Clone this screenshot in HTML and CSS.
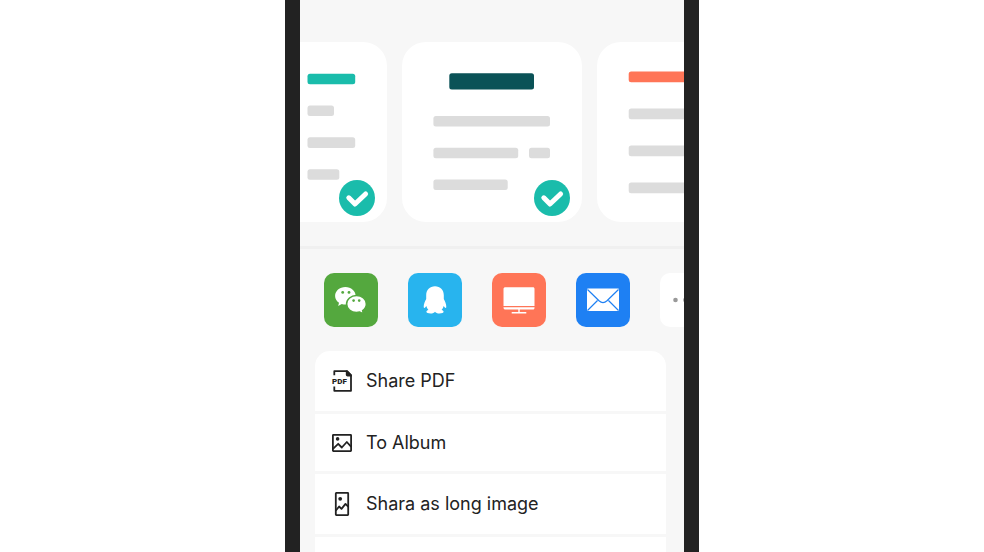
FILE: index.html
```html
<!DOCTYPE html>
<html lang="en">
<head>
<meta charset="utf-8">
<meta name="viewport" content="width=device-width, initial-scale=1">
<title>Share</title>
<link rel="stylesheet" href="styles.css">
</head>
<body>
<main class="phone">
  <section class="pages">
    <label class="page">
      <svg class="art" viewBox="0 0 180 180" aria-hidden="true">
        <g fill="#dcdcdc">
          <rect x="100.500" y="31.700" width="47.700" height="10.600" rx="2.500" fill="#1abcab"/>
          <rect x="100.500" y="63.500" width="26.500" height="10.600" rx="2.500"/>
          <rect x="100.500" y="95.300" width="47.700" height="10.600" rx="2.500"/>
          <rect x="100.500" y="127.200" width="31.800" height="10.600" rx="2.500"/>
        </g>
      </svg>
      <input class="check" type="checkbox" checked aria-label="Page 1">
      <svg class="tick" viewBox="0 0 36 36" aria-hidden="true"><path d="M9.800 17.800l6.200 6.200L26.600 14" /></svg>
    </label>
    <label class="page">
      <svg class="art" viewBox="0 0 180 180" aria-hidden="true">
        <g fill="#dcdcdc">
          <rect x="47.300" y="31.300" width="84.700" height="16.200" rx="2.500" fill="#0a5257"/>
          <rect x="31.400" y="74" width="116.600" height="10.600" rx="2.500"/>
          <rect x="31.400" y="105.700" width="84.800" height="10.600" rx="2.500"/>
          <rect x="127" y="105.700" width="21" height="10.600" rx="2.500"/>
          <rect x="31.400" y="137.500" width="74.300" height="10.600" rx="2.500"/>
        </g>
      </svg>
      <input class="check" type="checkbox" checked aria-label="Page 2">
      <svg class="tick" viewBox="0 0 36 36" aria-hidden="true"><path d="M9.800 17.800l6.200 6.200L26.600 14" /></svg>
    </label>
    <div class="page">
      <svg class="art" viewBox="0 0 180 180" aria-hidden="true">
        <g fill="#dcdcdc">
          <rect x="31.700" y="29.600" width="117" height="10.600" rx="2.500" fill="#ff7557"/>
          <rect x="31.700" y="66.600" width="117" height="10.600" rx="2.500"/>
          <rect x="31.700" y="103.600" width="117" height="10.600" rx="2.500"/>
          <rect x="31.700" y="140.600" width="117" height="10.600" rx="2.500"/>
        </g>
      </svg>
    </div>
  </section>

  <nav class="apps" aria-label="Share to">
    <button class="app wechat" aria-label="WeChat">
      <svg viewBox="0 0 54 54">
        <path fill="#fff" d="M21.400 14c-5.800 0-10.300 3.900-10.300 8.900 0 2.800 1.500 5.200 3.900 6.800l-.8 3.200 3.600-1.900c1.100.4 2.300.6 3.600.6 5.700 0 10.300-3.900 10.300-8.700s-4.600-8.900-10.300-8.900z"/>
        <path fill="#fff" stroke="#54a83e" stroke-width="1.600" d="M32.500 22.500c-5.500 0-9.900 3.800-9.900 8.500s4.400 8.500 9.900 8.500c1.100 0 2.200-.2 3.200-.5l3.800 2-.8-3.400c2.300-1.500 3.700-3.900 3.700-6.600 0-4.700-4.400-8.500-9.900-8.500z"/>
        <g fill="#54a83e"><circle cx="18.700" cy="19.400" r="1.400"/><circle cx="25" cy="19.400" r="1.400"/><circle cx="29.600" cy="27.600" r="1.300"/><circle cx="35.200" cy="27.600" r="1.300"/></g>
      </svg>
    </button>
    <button class="app qq" aria-label="QQ">
      <svg viewBox="0 0 54 54"><path fill="#fff" d="M27 13.200c-5.200 0-8.800 3.700-8.800 9v3.900c-.8 1.800-2.700 5-2.500 7.800.1 1.300.9 1.200 1.500.5l1.100-1.500c.3 1.500 1 2.800 2.100 4-1.300.4-2 1-2 1.900 0 1.200 1.800 1.700 4.200 1.700 2 0 3.600-.7 4.400-1.800.8 1.100 2.400 1.800 4.400 1.800 2.400 0 4.200-.5 4.200-1.700 0-.9-.7-1.500-2-1.900 1.100-1.200 1.800-2.500 2.100-4l1.100 1.500c.6.700 1.400.8 1.500-.5.200-2.800-1.700-6-2.500-7.800v-3.900c0-5.300-3.600-9-8.800-9z"/></svg>
    </button>
    <button class="app desktop" aria-label="Computer">
      <svg viewBox="0 0 54 54" fill="#fff">
        <path d="M13.500 14.200h27.500c.9 0 1.500.6 1.500 1.500v17.300h-31v-17.300c0-.9.800-1.500 2-1.500zM11.500 34.200h31v.8c0 .9-.6 1.500-1.500 1.500h-13.300v2.500h6.600v1.500h-14.600v-1.500h6.600v-2.500h-12.800c-1.200 0-2-.6-2-1.500z"/>
      </svg>
    </button>
    <button class="app mail" aria-label="Mail">
      <svg viewBox="0 0 54 54">
        <rect x="11" y="15.500" width="32" height="22.500" rx="1" fill="#fff"/>
        <path fill="none" stroke="#1e80f3" stroke-width="1.200" d="M11.500 16.500l11.500 11.300q4 3.600 8 0l11.500-11.300M21.500 27.500L11.500 37.500M32.500 27.500l10 10"/>
      </svg>
    </button>
    <button class="app more" aria-label="More">
      <svg viewBox="0 0 54 54" fill="#999"><circle cx="15.500" cy="27" r="2.300"/><circle cx="25.500" cy="27" r="2.300"/><circle cx="35.500" cy="27" r="2.300"/></svg>
    </button>
  </nav>

  <div class="actions">
    <button class="action">
      <svg class="icon" viewBox="0 0 24 24" aria-hidden="true">
        <path fill="none" stroke="#222" stroke-width="1.800" stroke-linejoin="round" d="M4.300 6.300V2.200H17l4 4v15.600H4.300V17.500"/>
        <path fill="#222" d="M15.800 1.500H17.500l4.300 4.500v1.500h-4.200q-1.800 0-1.800-1.800z"/>
        <text class="pdf" x="2" y="15">PDF</text>
      </svg>
      Share PDF
    </button>
    <button class="action short">
      <svg class="icon" viewBox="0 0 24 24" aria-hidden="true" fill="none" stroke="#222" stroke-width="1.800" stroke-linejoin="round" stroke-linecap="round">
        <rect x="2.900" y="3.900" width="18.200" height="16.200" rx=".5"/>
        <path d="M3.500 17.300l4.700-4.500 3.600 3.700 5-5.500 4 4.300"/>
        <circle cx="7.600" cy="7.900" r="1.800" fill="#222" stroke="none"/>
      </svg>
      To Album
    </button>
    <button class="action">
      <svg class="icon" viewBox="0 0 24 24" aria-hidden="true" fill="none" stroke="#222" stroke-width="1.800" stroke-linejoin="round" stroke-linecap="round">
        <rect x="5.800" y=".900" width="12.400" height="22.200" rx=".5"/>
        <path d="M6.300 18l2.800-3.500 2.400 2.400 4-5 2.400 2.400"/>
        <circle cx="10.200" cy="6.800" r="1.900" fill="#222" stroke="none"/>
      </svg>
      Shara as long image
    </button>
    <div class="action"></div>
  </div>
</main>
</body>
</html>
```
FILE: styles.css
```css
* {
  box-sizing: border-box;
}

body {
  margin: 0;
  background: #fff;
  color: #222;
  font-family: Inter, "Liberation Sans", sans-serif;
}

button {
  border: 0;
  padding: 0;
  font: inherit;
  color: inherit;
  cursor: pointer;
}

.phone {
  max-width: 414px;
  height: 100vh;
  margin: 0 auto;
  border: solid #222;
  border-width: 0 15px;
  background: #f7f7f7;
  overflow: hidden;
}

.pages {
  display: flex;
  justify-content: center;
  gap: 15px;
  padding: 42px 0 24px;
  border-bottom: 3px solid #f0f0f0;
  overflow: hidden;
}

.page {
  position: relative;
  flex: none;
  width: 180px;
  border-radius: 24px;
  background: #fff;
}

.art,
.app svg {
  display: block;
  width: 100%;
}

.check,
.tick {
  position: absolute;
  right: 12px;
  bottom: 6px;
  width: 36px;
  height: 36px;
}

.check {
  appearance: none;
  margin: 0;
  border-radius: 50%;
  background: #ddd;
}

.check:checked {
  background: #1abcab;
}

.tick {
  fill: none;
  stroke: #fff;
  stroke-width: 5;
  stroke-linecap: round;
  stroke-linejoin: round;
  pointer-events: none;
}

.apps {
  display: flex;
  gap: 30px;
  padding: 24px;
  overflow: hidden;
}

.app {
  flex: none;
  width: 54px;
  border-radius: 10px;
}

.wechat { background: #54a83e; }
.qq { background: #28b4ee; }
.desktop { background: #ff7557; }
.mail { background: #1e80f3; }
.more { background: #fff; }

.actions {
  display: flex;
  flex-direction: column;
  gap: 3px;
  margin: 0 18px 0 15px;
  border-radius: 15px 15px 0 0;
  overflow: hidden;
}

.action {
  display: flex;
  align-items: center;
  gap: 12px;
  min-height: 60px;
  padding: 0 15px;
  background: #fff;
  font-size: 18px;
  line-height: 24px;
}

.short {
  min-height: 57px;
}

.icon {
  width: 24px;
  height: 24px;
}

.pdf {
  font: 900 8px Roboto, sans-serif;
  fill: #222;
}
```
